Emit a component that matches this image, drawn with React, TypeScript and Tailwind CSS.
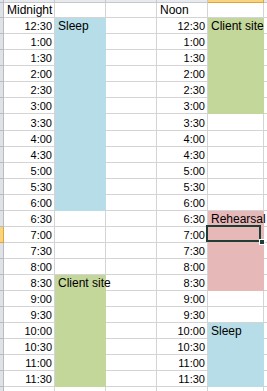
type Fill = "blue" | "green" | "pink" | null;

const fills = {
  blue: "bg-[#b7dee8] border-transparent",
  green: "bg-[#c4d79b] border-transparent",
  pink: "bg-[#e6b8b7] border-transparent",
};

const times = [
  "12:30", "1:00", "1:30", "2:00", "2:30", "3:00", "3:30", "4:00", "4:30", "5:00", "5:30", "6:00",
  "6:30", "7:00", "7:30", "8:00", "8:30", "9:00", "9:30", "10:00", "10:30", "11:00", "11:30",
];

type Block = { from: number; to: number; fill: Fill; label: string };

// rows are 1-based (row 0 holds the Midnight / Noon headings)
const amBlocks: Block[] = [
  { from: 1, to: 12, fill: "blue", label: "Sleep" },
  { from: 17, to: 23, fill: "green", label: "Client site" },
];

const pmBlocks: Block[] = [
  { from: 1, to: 6, fill: "green", label: "Client site" },
  { from: 13, to: 17, fill: "pink", label: "Rehearsal" },
  { from: 20, to: 23, fill: "blue", label: "Sleep" },
];

function lookup(blocks: Block[], row: number): { fill: Fill; label: string } {
  const b = blocks.find((x) => row >= x.from && row <= x.to);
  if (!b) return { fill: null, label: "" };
  return { fill: b.fill, label: row === b.from ? b.label : "" };
}

function Cell({
  w,
  fill = null,
  right = false,
  children,
}: {
  w: string;
  fill?: Fill;
  right?: boolean;
  children?: React.ReactNode;
}) {
  const bg = fill ? fills[fill] : "border-[#d4d4d4]";
  return (
    <div
      className={`${w} ${bg} relative flex h-full shrink-0 items-end border-r border-b ${
        right ? "justify-end pr-[2px]" : "pl-[3px]"
      }`}
    >
      {children}
    </div>
  );
}

function Row({ idx }: { idx: number }) {
  const h = idx === 0 ? "h-[15px]" : idx === 7 ? "h-[17px]" : "h-[16px]";
  const selected = idx === 14;
  const am = lookup(amBlocks, idx);
  const pm = lookup(pmBlocks, idx);
  const t = idx >= 1 && idx <= 23 ? times[idx - 1] : "";

  return (
    <div className={`flex ${h} shrink-0`}>
      <div
        className={`h-full w-[4px] shrink-0 border-r border-b ${
          selected ? "bg-[#f8d47e] border-[#e1a43c]" : "bg-[#dfe2e6] border-[#b8bcc2]"
        }`}
      />
      <Cell w="w-[51px]" right={idx > 0}>
        {idx === 0 ? (
          <span className="whitespace-nowrap text-[12px] leading-[14px]">Midnight</span>
        ) : (
          <span className="whitespace-nowrap text-[11px] leading-[14px]">{t}</span>
        )}
      </Cell>
      <Cell w="w-[51px]" fill={am.fill}>
        {am.label && (
          <span className="absolute bottom-0 left-[3px] z-10 whitespace-nowrap text-[12px] leading-[14px]">
            {am.label}
          </span>
        )}
      </Cell>
      <Cell w="w-[51px]" />
      <Cell w="w-[51px]" right={idx > 0}>
        {idx === 0 ? (
          <span className="whitespace-nowrap text-[12px] leading-[14px]">Noon</span>
        ) : (
          <span className="whitespace-nowrap text-[11px] leading-[14px]">{t}</span>
        )}
      </Cell>
      <Cell w="w-[56px]" fill={pm.fill}>
        {pm.label && (
          <span className="absolute bottom-0 left-[3px] z-10 whitespace-nowrap text-[12px] leading-[14px]">
            {pm.label}
          </span>
        )}
      </Cell>
      <Cell w="w-[20px]" />
    </div>
  );
}

export default function App() {
  return (
    <div
      className="relative h-[391px] w-[267px] overflow-hidden bg-white text-black"
      style={{ fontFamily: '"Liberation Sans", Arial, sans-serif' }}
    >
      {/* column header edge */}
      <div className="flex h-[3px]">
        <div className="h-full w-[4px] shrink-0 border-r border-b border-[#b8bcc2] bg-[#dfe2e6]" />
        <div className="h-full w-[51px] shrink-0 border-r border-b border-[#c5c9cf] bg-[#e8eaed]" />
        <div className="h-full w-[51px] shrink-0 border-r border-b border-[#c5c9cf] bg-[#e8eaed]" />
        <div className="h-full w-[51px] shrink-0 border-r border-b border-[#c5c9cf] bg-[#e8eaed]" />
        <div className="h-full w-[51px] shrink-0 border-r border-b border-[#c5c9cf] bg-[#e8eaed]" />
        <div className="h-full w-[56px] shrink-0 border-r border-b border-[#e1a43c] bg-[#f8d47e]" />
        <div className="h-full w-[20px] shrink-0 border-b border-[#c5c9cf] bg-[#e8eaed]" />
      </div>

      {Array.from({ length: 25 }, (_, i) => (
        <Row key={i} idx={i} />
      ))}

      {/* active cell */}
      <div className="absolute left-[206px] top-[225px] z-20 h-[17px] w-[55px] border-2 border-[#1f3d37]" />
      <div className="absolute left-[260px] top-[240px] z-30 h-[4px] w-[4px] bg-[#1f3d37] outline outline-1 outline-white" />
    </div>
  );
}
